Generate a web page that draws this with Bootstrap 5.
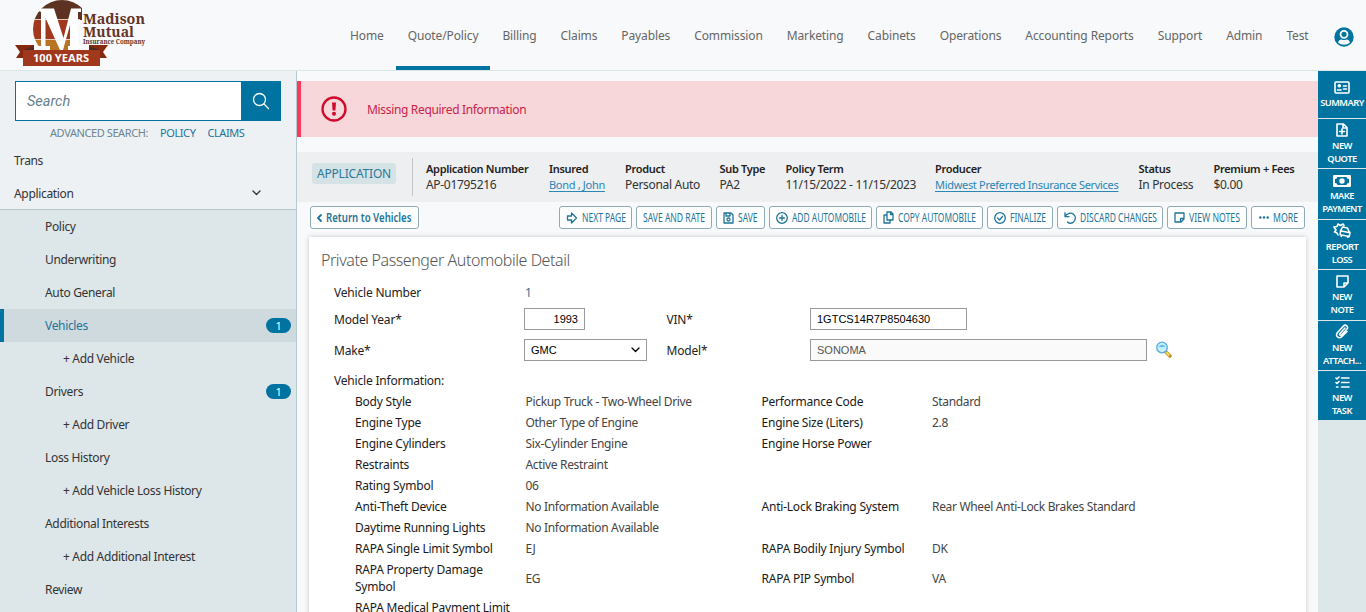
<!DOCTYPE html>
<html lang="en">
<head>
<meta charset="utf-8">
<meta name="viewport" content="width=device-width, initial-scale=1">
<title>Private Passenger Automobile Detail</title>
<link href="https://cdn.jsdelivr.net/npm/bootstrap@5.3.0/dist/css/bootstrap.min.css" rel="stylesheet">
<style>
:root{--brand:#0073a0;--line:#b4cace}
html,body{height:612px;overflow:hidden}
body{font-family:"Noto Sans","Open Sans",sans-serif;font-size:12px;line-height:17px;letter-spacing:-.33px;color:#333;background:#f7f9fb}
a{color:inherit;text-decoration:none}
svg{flex:none}
.ico{fill:none;stroke:currentColor;stroke-width:1.3;stroke-linecap:round;stroke-linejoin:round}
.topbar{height:71px;border-bottom:1px solid #dbe6e8}
.logo-box{width:338px;letter-spacing:0}
.topnav .nav-link{padding:0 12px;height:70px;line-height:71px;font-size:12px;letter-spacing:-.12px;color:#666;border-bottom:4px solid transparent;white-space:nowrap}
.topnav .nav-link.active{border-color:var(--brand)}
.sidebar{width:297px;height:541px;background:#edf1f4;border-right:1px solid var(--line);flex:none}
.search-form{margin:10px 15px 0;height:40px;width:266px}
.search-form .form-control{border:1px solid var(--brand);border-right:0;border-radius:0;font:italic 14.5px Roboto,sans-serif;letter-spacing:0;padding:0 11px;background:#fff}
.search-form .form-control::placeholder{color:#66808c}
.search-form .btn{width:40px;flex:none;background:var(--brand);border-radius:0;color:#fff;padding:0 0 3px}
.adv{font-size:11px;color:#6b8591;margin:3px 0 0 50px;height:20px;gap:12px;letter-spacing:-.41px}
.adv a{color:#1d7499}
.side-row{height:33px;padding-left:14px;color:#333}
.side-row.has-line{border-bottom:1px solid var(--line)}
.subnav{background:#dde6e9;height:403px}
.subnav .side-row{padding-left:45px;padding-right:5px}
.subnav .deeper{padding-left:63px}
.subnav .current{background:#cfdadf;border-left:4px solid var(--brand);padding-left:41px;color:#1d7499}
.count{width:25px;height:15px;line-height:15px;border-radius:8px;background:var(--brand);color:#fff;font-size:11px;text-align:center}
.main-col{width:1021px;flex:none;height:541px;overflow:hidden}
.missing{margin-top:10px;height:56px;background:#f8d7da;border-left:4px solid #f93a5f;color:#c9224b;padding-left:20px}
.missing span{margin-left:20px}
.infobar{margin-top:15px;height:50px;background:#edeff1;padding-left:15px}
.app-tag{width:84px;flex:none;height:21px;line-height:21px;margin-bottom:7px;border-radius:3px;background:#d5e3e6;color:#2a7899;text-align:center;letter-spacing:-.2px}
.vbar{width:1px;flex:none;height:38px;background:#bfc5c9;margin:0 13px 0 16px}
.facts{display:grid;grid-template-columns:123px 76px 94.5px 66px 149.5px 203.5px 75px auto;letter-spacing:-.31px}
.fact{line-height:16px;white-space:nowrap}
.fact b{display:block;font-weight:600;font-size:11px;color:#222}
.fact a{color:#2a86b5;text-decoration:underline;text-underline-offset:2px;font-size:11px}
.tools{margin-top:4px;padding:0 13px;gap:4px;letter-spacing:0}
.tool{height:23px;border:1px solid #8fabb8;border-radius:3px;background:#fff;color:#1d7499;display:flex;align-items:center;justify-content:center;gap:4px}
.tool svg{overflow:visible}
.tool text{font-size:12.5px;fill:currentColor}
.tool.back{width:109px;margin-right:auto;font-weight:600}
.sheet{margin:8px 12px 0;background:#fff;box-shadow:0 0 5px rgba(0,0,0,.2);height:400px;padding:13px 12px}
.sheet h1{font-size:16px;font-weight:300;line-height:20px;letter-spacing:-.43px;margin:0;color:#555}
.frow{display:grid;grid-template-columns:190px 142.5px 143.5px 1fr;align-items:center;margin-left:13px;color:#222;letter-spacing:-.2px}
.box{height:22px;border:1px solid #999;border-radius:0;font:11px "Liberation Sans",Arial,sans-serif;letter-spacing:0;padding:0 6px;line-height:20px;color:#000;background:#fff}
.drow{display:grid;grid-template-columns:170.5px 236px 170.5px 1fr;align-items:center;margin-left:34px;padding:2px 0;color:#1a1a1a;letter-spacing:-.22px}
.drow span:nth-child(even){color:#444;letter-spacing:-.33px}
.drow span:first-child{padding-right:6px}
.rail{width:48px;background:#dde6e9;height:541px;flex:none}
.rail a{display:flex;flex-direction:column;align-items:center;justify-content:center;background:var(--brand);color:#fff;border-bottom:1px solid #dde6e9;font-size:9.3px;font-weight:600;line-height:13px;letter-spacing:-.5px;text-align:center;height:50.4px;padding-top:1px}
.rail svg{margin-bottom:2px;stroke-width:1.6}
</style>
</head>
<body>
<header class="topbar d-flex">
  <div class="logo-box">
    <svg width="150" height="70" viewBox="0 0 150 70">
      <defs><clipPath id="disc"><circle cx="62" cy="29" r="29"/></clipPath></defs>
      <g clip-path="url(#disc)"><rect x="30" y="0" width="52" height="20" fill="#5e3222"/><rect x="30" y="20" width="48" height="20" fill="#a1371d"/><rect x="30" y="40" width="48" height="20" fill="#b87324"/><path d="M30 19.500h50M30 39.500h48" stroke="#e6cdbc" stroke-width="1"/></g>
      <path d="M39 8.500H54L63.500 38L71 8.500H81V12H78V46H81V50H68V46H70V25L63 50H60L45.500 18V46H50V50H38V46H41V12L39 11Z" fill="#fff"/>
      <path d="M15 45h19v13H16l4-6zM108 45H89v13h18l-4-6z" fill="#86290f"/><path d="M23 50l11-4v4zM100 50l-11-4v4z" fill="#512a1e"/>
      <rect x="23" y="50" width="77" height="16" fill="#a1371d"/>
      <text x="33" y="62" font-size="11" font-weight="700" fill="#fff" textLength="56" lengthAdjust="spacingAndGlyphs">100 YEARS</text>
      <g font-family="Noto Serif,Liberation Serif,serif" font-weight="700" fill="#633525"><text x="83" y="24" font-size="15" textLength="62" lengthAdjust="spacingAndGlyphs">Madison</text><text x="83" y="36.500" font-size="15" textLength="51" lengthAdjust="spacingAndGlyphs">Mutual</text><text x="83" y="43.500" font-size="6.500" textLength="62" lengthAdjust="spacingAndGlyphs">Insurance Company</text></g>
    </svg>
  </div>
  <nav class="nav topnav flex-nowrap">
    <a class="nav-link" href="#">Home</a><a class="nav-link active" href="#">Quote/Policy</a><a class="nav-link" href="#">Billing</a><a class="nav-link" href="#">Claims</a><a class="nav-link" href="#">Payables</a><a class="nav-link" href="#">Commission</a><a class="nav-link" href="#">Marketing</a><a class="nav-link" href="#">Cabinets</a><a class="nav-link" href="#">Operations</a><a class="nav-link" href="#">Accounting Reports</a><a class="nav-link" href="#">Support</a><a class="nav-link" href="#">Admin</a><a class="nav-link" href="#">Test</a>
  </nav>
  <a href="#" class="ms-auto me-2 pe-1 pt-1 d-flex align-items-center" aria-label="Account"><svg width="20" height="20" viewBox="0 0 20 20"><circle cx="10" cy="10" r="9.700" fill="#0073a0"/><circle cx="10" cy="7.300" r="3.500" fill="none" stroke="#fff" stroke-width="1.800"/><path d="M4 15.500Q5 12.500 7.500 12.500Q10 13.500 12.500 12.500Q15 12.500 16 15.500Q13.500 17.800 10 17.800Q6.500 17.800 4 15.500Z" fill="#fff"/></svg></a>
</header>
<div class="d-flex">
  <aside class="sidebar">
    <form class="search-form d-flex"><input class="form-control" placeholder="Search" aria-label="Search"><button class="btn" type="button" aria-label="Search"><svg class="ico" width="18" height="18" viewBox="0 0 18 18"><circle cx="7.500" cy="7.500" r="6"/><path d="M12 12l4.500 4.500"/></svg></button></form>
    <div class="adv d-flex"><span>ADVANCED SEARCH:</span><a href="#">POLICY</a><a href="#">CLAIMS</a></div>
    <div class="side-row d-flex align-items-center">Trans</div>
    <div class="side-row has-line d-flex align-items-center">Application<svg class="ico ms-auto" width="9" height="6" viewBox="0 0 9 6" style="margin-right:35px"><path d="M1 1l3.500 3.500L8 1"/></svg></div>
    <nav class="subnav">
      <a class="side-row d-flex align-items-center" href="#">Policy</a>
      <a class="side-row d-flex align-items-center" href="#">Underwriting</a>
      <a class="side-row d-flex align-items-center" href="#">Auto General</a>
      <a class="side-row current d-flex align-items-center" href="#">Vehicles<span class="count ms-auto">1</span></a>
      <a class="side-row deeper d-flex align-items-center" href="#">+ Add Vehicle</a>
      <a class="side-row d-flex align-items-center" href="#">Drivers<span class="count ms-auto">1</span></a>
      <a class="side-row deeper d-flex align-items-center" href="#">+ Add Driver</a>
      <a class="side-row d-flex align-items-center" href="#">Loss History</a>
      <a class="side-row deeper d-flex align-items-center" href="#">+ Add Vehicle Loss History</a>
      <a class="side-row d-flex align-items-center" href="#">Additional Interests</a>
      <a class="side-row deeper d-flex align-items-center" href="#">+ Add Additional Interest</a>
      <a class="side-row d-flex align-items-center" href="#">Review</a>
    </nav>
  </aside>
  <main class="main-col">
    <div class="missing d-flex align-items-center"><svg width="26" height="26" viewBox="0 0 26 26"><circle cx="13" cy="13" r="11.500" fill="none" stroke="#cf0a2c" stroke-width="2.300"/><path d="M11 6.500h4l-.6 8h-2.800z" fill="#cf0a2c"/><circle cx="13" cy="17.700" r="2" fill="#cf0a2c"/></svg><span>Missing Required Information</span></div>
    <div class="infobar d-flex align-items-center">
      <span class="app-tag">APPLICATION</span><span class="vbar"></span>
      <div class="facts">
        <div class="fact"><b>Application Number</b>AP-01795216</div>
        <div class="fact"><b>Insured</b><a href="#">Bond , John</a></div>
        <div class="fact"><b>Product</b>Personal Auto</div>
        <div class="fact"><b>Sub Type</b>PA2</div>
        <div class="fact"><b>Policy Term</b>11/15/2022 - 11/15/2023</div>
        <div class="fact"><b>Producer</b><a href="#">Midwest Preferred Insurance Services</a></div>
        <div class="fact"><b>Status</b>In Process</div>
        <div class="fact"><b>Premium + Fees</b>$0.00</div>
      </div>
    </div>
    <div class="tools d-flex">
      <a class="tool back" href="#"><svg class="ico" width="5" height="8" viewBox="0 0 5 8" style="stroke-width:1.8"><path d="M4 1L1 4l3 3"/></svg><svg width="86" height="17"><text y="13" textLength="85.500" lengthAdjust="spacingAndGlyphs">Return to Vehicles</text></svg></a>
      <a class="tool" href="#" style="width:73px"><svg class="ico" width="12" height="12" viewBox="0 0 11 12"><path d="M1 4h4V1l5 5-5 5V8H1z"/></svg><svg width="44" height="17"><text y="13" textLength="44" lengthAdjust="spacingAndGlyphs">NEXT PAGE</text></svg></a>
      <a class="tool" href="#" style="width:76px"><svg width="62" height="17"><text y="13" textLength="62" lengthAdjust="spacingAndGlyphs">SAVE AND RATE</text></svg></a>
      <a class="tool" href="#" style="width:49px"><svg class="ico" width="11" height="12" viewBox="0 0 11 12"><path d="M1 1h7l2 2v8H1zM3 1v3h4V1"/><circle cx="5.500" cy="7.500" r="1.500"/></svg><svg width="20" height="17"><text y="13" textLength="19.500" lengthAdjust="spacingAndGlyphs">SAVE</text></svg></a>
      <a class="tool" href="#" style="width:103px"><svg class="ico" width="12" height="12" viewBox="0 0 12 12"><circle cx="6" cy="6" r="5.300"/><path d="M3.500 6h5M6 3.500v5"/></svg><svg width="74" height="17"><text y="13" textLength="74" lengthAdjust="spacingAndGlyphs">ADD AUTOMOBILE</text></svg></a>
      <a class="tool" href="#" style="width:107px"><svg class="ico" width="11" height="13" viewBox="0 0 11 13"><path d="M4 1h4l2 2v6H4zM4 4H1v8h6V9.500M7.500 1v2.500H10"/></svg><svg width="78" height="17"><text y="13" textLength="78" lengthAdjust="spacingAndGlyphs">COPY AUTOMOBILE</text></svg></a>
      <a class="tool" href="#" style="width:66px"><svg class="ico" width="12" height="12" viewBox="0 0 12 12"><circle cx="6" cy="6" r="5.300"/><path d="M3.500 6l2 2 3-3.500"/></svg><svg width="36" height="17"><text y="13" textLength="36" lengthAdjust="spacingAndGlyphs">FINALIZE</text></svg></a>
      <a class="tool" href="#" style="width:106px"><svg class="ico" width="12" height="12" viewBox="0 0 12 12"><path d="M1 .7v4h4M1 4.500C3 1 7 .2 9.500 2.200S12 8 9.500 10 4.500 11 3.500 10"/></svg><svg width="77" height="17"><text y="13" textLength="77" lengthAdjust="spacingAndGlyphs">DISCARD CHANGES</text></svg></a>
      <a class="tool" href="#" style="width:80px"><svg class="ico" width="11" height="11" viewBox="0 0 11 11"><path d="M1 1h9v6l-3 3H1zM10 6.500H6.500V10"/></svg><svg width="51" height="17"><text y="13" textLength="51" lengthAdjust="spacingAndGlyphs">VIEW NOTES</text></svg></a>
      <a class="tool" href="#" style="width:54px"><svg width="10" height="3" viewBox="0 0 10 3" fill="currentColor"><circle cx="1.300" cy="1.500" r="1.200"/><circle cx="5" cy="1.500" r="1.200"/><circle cx="8.700" cy="1.500" r="1.200"/></svg><svg width="25" height="17"><text y="13" textLength="25" lengthAdjust="spacingAndGlyphs">MORE</text></svg></a>
    </div>
    <section class="sheet">
      <h1>Private Passenger Automobile Detail</h1>
      <div class="frow" style="height:17px;margin-top:14px"><span>Vehicle Number</span><span style="color:#2a7899;padding-left:1px">1</span></div>
      <div class="frow" style="height:22px;margin-top:7px"><span>Model Year*</span><div class="box text-end" style="width:61px">1993</div><span>VIN*</span><div class="box" style="width:157px">1GTCS14R7P8504630</div></div>
      <div class="frow" style="height:22px;margin-top:9px"><span>Make*</span><div class="box d-flex align-items-center" style="width:123px">GMC<svg class="ico ms-auto" width="9" height="6" viewBox="0 0 9 6"><path d="M1 1l3.500 3.500L8 1"/></svg></div><span>Model*</span><div class="d-flex align-items-center"><div class="box" style="width:337px;background:#fafafa;color:#555">SONOMA</div><svg class="ms-2" width="18" height="18" viewBox="0 0 18 18"><path d="M11 11l4 4" stroke="#b98b22" stroke-width="3.400" stroke-linecap="round"/><path d="M11 11l3.500 3.500" stroke="#f7d45b" stroke-width="2.200"/><circle cx="7" cy="6.500" r="5.300" fill="#c6eefd" stroke="#5aa9dd" stroke-width="1.300"/><path d="M3.500 6Q7 1.500 10.500 6Z" fill="#5ec0f2"/></svg></div></div>
      <div class="frow" style="height:17px;margin-top:11px"><span>Vehicle Information:</span></div>
      <div style="height:2px"></div>
      <div class="drow"><span>Body Style</span><span>Pickup Truck - Two-Wheel Drive</span><span>Performance Code</span><span>Standard</span></div>
      <div class="drow"><span>Engine Type</span><span>Other Type of Engine</span><span>Engine Size (Liters)</span><span>2.8</span></div>
      <div class="drow"><span>Engine Cylinders</span><span>Six-Cylinder Engine</span><span>Engine Horse Power</span></div>
      <div class="drow"><span>Restraints</span><span>Active Restraint</span></div>
      <div class="drow"><span>Rating Symbol</span><span>06</span></div>
      <div class="drow"><span>Anti-Theft Device</span><span>No Information Available</span><span>Anti-Lock Braking System</span><span>Rear Wheel Anti-Lock Brakes Standard</span></div>
      <div class="drow"><span>Daytime Running Lights</span><span>No Information Available</span></div>
      <div class="drow"><span>RAPA Single Limit Symbol</span><span>EJ</span><span>RAPA Bodily Injury Symbol</span><span>DK</span></div>
      <div class="drow"><span>RAPA Property Damage<br>Symbol</span><span>EG</span><span>RAPA PIP Symbol</span><span>VA</span></div>
      <div class="drow"><span>RAPA Medical Payment Limit<br>Symbol</span><span>EJ</span></div>
    </section>
  </main>
  <aside class="rail">
    <a href="#" style="height:48px"><svg class="ico" width="16" height="13" viewBox="0 0 16 13"><rect x="1" y="1" width="14" height="11" rx="1"/><path d="M9.500 5h3M9.500 8h3"/><circle cx="5.300" cy="4.800" r="1" fill="currentColor"/><path d="M3.500 9h3.600"/></svg>SUMMARY</a>
    <a href="#"><svg class="ico" width="12" height="14" viewBox="0 0 12 14"><path d="M1 1h6.500L11 4.500V13H1zM7 1v4h4M6 6v5M3.500 8.500h5"/></svg>NEW<br>QUOTE</a>
    <a href="#"><svg width="18" height="12" viewBox="0 0 18 12"><path fill="currentColor" fill-rule="evenodd" d="M1 0h16q1 0 1 1v10q0 1-1 1H1q-1 0-1-1V1Q0 0 1 0zM4.500 2Q4.300 3.800 2 4v4q2.300.2 2.500 2h9q.2-1.800 2.500-2V4q-2.300-.2-2.500-2z"/><circle cx="9" cy="6" r="2.700" fill="currentColor"/></svg>MAKE<br>PAYMENT</a>
    <a href="#"><svg class="ico" width="18" height="15" viewBox="0 0 18 15"><path d="M8 7l1.500-3 5 1 1.500 3.500 1 1-.8 4-9-1.800.4-4zM8 8l8 1.500M8.500 12l-.3 1.500M15 13.300l-.3 1.200M5 12l-1-2-2.500-1L3 7 1 4l3-.5L5 1l2.500 1.500L10 1l1 1.500"/></svg>REPORT<br>LOSS</a>
    <a href="#"><svg class="ico" width="13" height="13" viewBox="0 0 13 13"><path d="M1 1h11v7l-4 4H1zM12 8H8v4"/></svg>NEW<br>NOTE</a>
    <a href="#"><svg class="ico" width="14" height="15" viewBox="0 0 14 15"><path d="M10 4L5 9.500c-1 1.200.6 2.500 1.700 1.400L12 5c2-2.500-1.500-5-3.500-3L2.500 8.500c-3 3.500 1.500 7 4.500 4L12 7.500"/></svg>NEW<br>ATTACH...</a>
    <a href="#"><svg class="ico" width="15" height="13" viewBox="0 0 15 13"><path d="M6.500 2H14M6.500 6.500H14M6.500 11H14M1 2l1 1 2-2M1 6.500l1 1 2-2M1.500 11h1.500"/></svg>NEW<br>TASK</a>
  </aside>
</div>
<script src="https://cdn.jsdelivr.net/npm/bootstrap@5.3.0/dist/js/bootstrap.bundle.min.js"></script>
</body>
</html>
